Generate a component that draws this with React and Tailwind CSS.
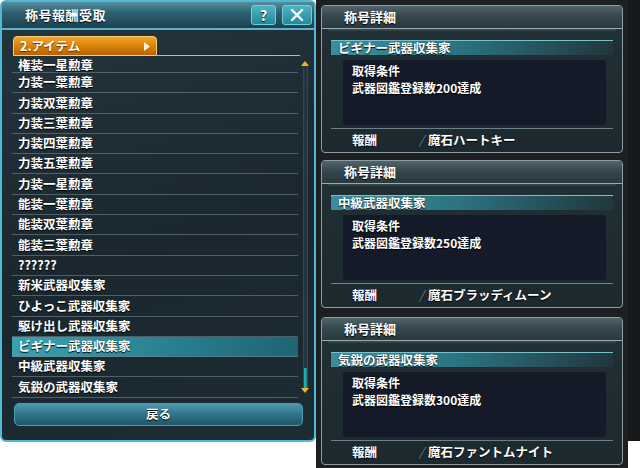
import React from 'react'

const ITEMS = [
  '権装一星勲章',
  '力装一葉勲章',
  '力装双葉勲章',
  '力装三葉勲章',
  '力装四葉勲章',
  '力装五葉勲章',
  '力装一星勲章',
  '能装一葉勲章',
  '能装双葉勲章',
  '能装三葉勲章',
  '??????',
  '新米武器収集家',
  'ひよっこ武器収集家',
  '駆け出し武器収集家',
  'ビギナー武器収集家',
  '中級武器収集家',
  '気鋭の武器収集家'
]

const SELECTED = 'ビギナー武器収集家'

const DETAILS = [
  { title: 'ビギナー武器収集家', cond: '武器図鑑登録数200達成', reward: '魔石ハートキー', mt: 'mt-[5px]' },
  { title: '中級武器収集家', cond: '武器図鑑登録数250達成', reward: '魔石ブラッディムーン', mt: 'mt-[7px]' },
  { title: '気鋭の武器収集家', cond: '武器図鑑登録数300達成', reward: '魔石ファントムナイト', mt: 'mt-[9px]' }
]

function DetailPanel({ title, cond, reward, mt }) {
  return (
    <div className={`${mt} ml-[5px] w-[302px] h-[148px] border border-[#8c9ca2] rounded-[4px] bg-[linear-gradient(180deg,#223136,#1c292e)] flex flex-col overflow-hidden`}>
      {/* Title bar */}
      <div className="h-[23px] shrink-0 flex items-center pl-[22px] border-b border-[#9aabb0] bg-[linear-gradient(180deg,#50646a,#34454b_50%,#283940)]">
        <span className="text-[13px] font-bold text-white [text-shadow:0_1px_1px_#000]">称号詳細</span>
      </div>
      <div className="h-[2px] mx-[6px] bg-[#33454b]"></div>
      {/* Subtitle */}
      <div className="mt-[9px] mx-[9px] h-[15px] shrink-0 flex items-center pl-[7px] border-t border-[#7cc0ca] bg-[linear-gradient(90deg,#3a8e9b,#2b7482_45%,rgba(40,100,112,0.15))]">
        <span className="text-[12.5px] font-bold text-white leading-none [text-shadow:0_1px_1px_#000]">{title}</span>
      </div>
      {/* Condition box */}
      <div className="mt-[5px] ml-[21px] mr-[16px] h-[65px] shrink-0 rounded-[3px] bg-[#141a27] px-[9px] pt-[2px] text-[12px] font-bold text-white leading-[18px] [text-shadow:0_1px_1px_#000]">
        <p>取得条件</p>
        <p className="-mt-[1px]">{cond}</p>
      </div>
      {/* Reward */}
      <div className="mt-[3px] mx-[9px] border-t border-[#6e8086] flex-1 flex items-center pl-[21px] text-[12.5px] font-bold text-white [text-shadow:0_1px_1px_#000]">
        <span>報酬</span>
        <span className="ml-[42px] mr-[4px] text-[#7d8c92] font-normal italic">/</span>
        <span>{reward}</span>
      </div>
    </div>
  )
}

export default function App() {
  return (
    <div className="w-[640px] h-[468px] flex bg-white overflow-hidden font-['Noto_Sans_CJK_JP','Noto_Sans',sans-serif]">
      {/* Left: reward list */}
      <div className="w-[316px] shrink-0">
        <div className="w-[316px] h-[442px] rounded-[6px] border-2 border-[#52b9d4] bg-[linear-gradient(165deg,#25353e,#1a272f_55%,#1d2b33)] flex flex-col overflow-hidden">
          {/* Title bar */}
          <div className="h-[28px] shrink-0 flex items-center border-b-2 border-[#5eb4c8] bg-[linear-gradient(180deg,#56909f,#2e6172_40%,#1c4252)]">
            <span className="ml-[23px] text-[13px] font-bold text-white tracking-[0.5px] [text-shadow:0_1px_1px_#000]">称号報酬受取</span>
            <div className="ml-auto mr-[2px] flex gap-[6px] items-center">
              <div className="w-[25px] h-[20px] rounded-[3px] flex items-center justify-center border border-[#6fd0dc] bg-[linear-gradient(180deg,#4fb4c2,#23899a)] text-white text-[14px] font-bold [text-shadow:0_1px_1px_#000]">?</div>
              <div className="w-[30px] h-[20px] rounded-[3px] flex items-center justify-center border border-[#6fd0dc] bg-[linear-gradient(180deg,#4fb4c2,#23899a)]">
                <svg width="14" height="14" viewBox="0 0 14 14" fill="none" stroke="#fff" strokeWidth="2.4" strokeLinecap="round">
                  <path d="M2 2 L12 12 M12 2 L2 12" />
                </svg>
              </div>
            </div>
          </div>

          {/* Tab row */}
          <div className="mt-[6px] ml-[11px] mr-[14px] flex items-end shrink-0">
            <div className="w-[144px] h-[20px] rounded-t-[4px] border border-[#f3cf7c] bg-[linear-gradient(180deg,#f2a628,#d77f08_55%,#b86300)] flex items-center pl-[6px] pr-[6px]">
              <span className="text-[12.5px] font-bold text-white [text-shadow:0_1px_1px_#5a2c00]">2.アイテム</span>
              <svg className="ml-auto" width="6" height="9" viewBox="0 0 6 9">
                <path d="M0 0 L6 4.5 L0 9 Z" fill="#fff3d0" />
              </svg>
            </div>
            <div className="flex-1 h-[1px] bg-[#a9bcc4]"></div>
          </div>

          {/* List + scrollbar */}
          <div className="mt-[1px] h-[342px] shrink-0 flex">
            <div className="ml-[10px] w-[286px] overflow-hidden">
              {ITEMS.map((item, i) => (
                <div
                  key={item}
                  className={`${i === 0 ? 'h-[16px] leading-[14px]' : 'h-[20.3px]'} flex items-center pl-[6px] border-b border-[#6f858f]/60 text-[12.5px] font-bold text-white [text-shadow:0_1px_1px_#000] ${
                    item === SELECTED ? 'bg-[linear-gradient(90deg,#3aa2b1,#2a8393_50%,#1f6473)]' : ''
                  }`}
                >
                  {item}
                </div>
              ))}
            </div>
            <div className="ml-[3px] w-[8px] flex flex-col items-center pt-[4px]">
              <svg width="8" height="5" viewBox="0 0 8 5">
                <path d="M0 5 L4 0 L8 5 Z" fill="#f0b526" />
              </svg>
              <div className="mt-[1px] w-[5px] h-[321px] bg-[#24343d] border-x border-[#34474f] flex flex-col justify-end">
                <div className="h-[20px] bg-[linear-gradient(90deg,#2fb3b8,#1f8a92)]"></div>
              </div>
              <svg width="8" height="5" viewBox="0 0 8 5">
                <path d="M0 0 L8 0 L4 5 Z" fill="#f0b526" />
              </svg>
            </div>
          </div>

          {/* Back button */}
          <div className="mt-[4px] ml-[12px] w-[289px] h-[23px] shrink-0 rounded-[5px] border border-[#4f9cb0] bg-[linear-gradient(180deg,#4d9ab0,#2f7489_50%,#1f586b)] flex items-center justify-center">
            <span className="text-[12.5px] font-bold text-white [text-shadow:0_1px_1px_#000]">戻る</span>
          </div>
        </div>
      </div>

      {/* Right: detail panels */}
      <div className="w-[312px] h-[468px] shrink-0 bg-[#1d2022] flex flex-col">
        {DETAILS.map((d) => (
          <DetailPanel key={d.title} {...d} />
        ))}
      </div>
      <div className="w-[12px] h-[441px] shrink-0 bg-[#161819]"></div>
    </div>
  )
}
